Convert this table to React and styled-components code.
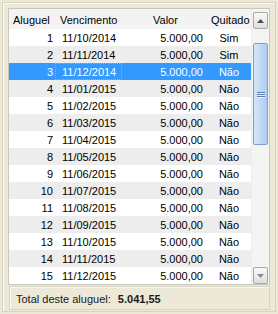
import styled, { createGlobalStyle } from 'styled-components';

const GlobalStyle = createGlobalStyle`
  html, body {
    margin: 0;
    padding: 0;
    background: #ece9d8;
  }
  body {
    font-family: "Liberation Sans", Arial, sans-serif;
    font-size: 11px;
    color: #000;
  }
`;

const parcelas = [
  { n: 1, venc: '11/10/2014', valor: '5.000,00', quitado: 'Sim' },
  { n: 2, venc: '11/11/2014', valor: '5.000,00', quitado: 'Sim' },
  { n: 3, venc: '11/12/2014', valor: '5.000,00', quitado: 'Não' },
  { n: 4, venc: '11/01/2015', valor: '5.000,00', quitado: 'Não' },
  { n: 5, venc: '11/02/2015', valor: '5.000,00', quitado: 'Não' },
  { n: 6, venc: '11/03/2015', valor: '5.000,00', quitado: 'Não' },
  { n: 7, venc: '11/04/2015', valor: '5.000,00', quitado: 'Não' },
  { n: 8, venc: '11/05/2015', valor: '5.000,00', quitado: 'Não' },
  { n: 9, venc: '11/06/2015', valor: '5.000,00', quitado: 'Não' },
  { n: 10, venc: '11/07/2015', valor: '5.000,00', quitado: 'Não' },
  { n: 11, venc: '11/08/2015', valor: '5.000,00', quitado: 'Não' },
  { n: 12, venc: '11/09/2015', valor: '5.000,00', quitado: 'Não' },
  { n: 13, venc: '11/10/2015', valor: '5.000,00', quitado: 'Não' },
  { n: 14, venc: '11/11/2015', valor: '5.000,00', quitado: 'Não' },
  { n: 15, venc: '11/12/2015', valor: '5.000,00', quitado: 'Não' },
];

const SELECTED = 3;

function App() {
  return (
    <>
      <GlobalStyle />
      <Frame>
        <Grid>
          <Table>
            <HeaderRow>
              <HeadCell>Aluguel</HeadCell>
              <HeadCell>Vencimento</HeadCell>
              <HeadCell>Valor</HeadCell>
              <HeadCell>Quitado</HeadCell>
            </HeaderRow>
            {parcelas.map((p, i) => {
              const selected = p.n === SELECTED;
              return (
                <Row key={p.n} $odd={i % 2 === 1} $selected={selected}>
                  <NumCell>{p.n}</NumCell>
                  <DateCell>
                    <Focus $active={selected}>{p.venc}</Focus>
                  </DateCell>
                  <ValueCell>{p.valor}</ValueCell>
                  <PaidCell>{p.quitado}</PaidCell>
                </Row>
              );
            })}
          </Table>
          <ScrollBar>
            <ArrowButton>
              <svg width="7" height="4" viewBox="0 0 7 4">
                <path d="M0 4 L3.5 0 L7 4 Z" fill="#4d4d4d" />
              </svg>
            </ArrowButton>
            <Track>
              <Thumb>
                <Grip>
                  <span />
                  <span />
                  <span />
                </Grip>
              </Thumb>
            </Track>
            <ArrowButton>
              <svg width="7" height="4" viewBox="0 0 7 4">
                <path d="M0 0 L7 0 L3.5 4 Z" fill="#8a8a8a" />
              </svg>
            </ArrowButton>
          </ScrollBar>
        </Grid>
        <Footer>
          Total deste aluguel: <strong>5.041,55</strong>
        </Footer>
      </Frame>
    </>
  );
}

export default App;

const Frame = styled.div`
  margin: 2px;
  width: 274px;
  height: 310px;
  border: 1px solid #d6d3c6;
  box-shadow: inset 1px 1px 0 #fbfaf6;
  padding: 5px 5px 1px 5px;
  box-sizing: border-box;
  display: flex;
  flex-direction: column;
  gap: 1px;
`;

const Grid = styled.div`
  display: flex;
  height: 277px;
  border: 1px solid #c9c7ba;
  background: #fff;
  box-sizing: border-box;
`;

const Table = styled.div`
  width: 242px;
  display: flex;
  flex-direction: column;
`;

const columns = '47px 93px 58px 44px';

const HeaderRow = styled.div`
  display: grid;
  grid-template-columns: ${columns};
  height: 20px;
  background: #f3f3f3;
`;

const HeadCell = styled.div`
  display: flex;
  align-items: center;
  padding-left: 4px;
  padding-top: 1px;
  white-space: nowrap;
`;

const Row = styled.div`
  display: grid;
  grid-template-columns: ${columns};
  height: 17px;
  align-items: center;
  background: ${(p) => (p.$selected ? '#3399ff' : p.$odd ? '#ededed' : '#fff')};
  color: ${(p) => (p.$selected ? '#fff' : '#000')};
`;

const NumCell = styled.div`
  text-align: right;
  padding-right: 3px;
`;

const DateCell = styled.div`
  height: 17px;
  display: flex;
  align-items: stretch;
`;

/* dotted focus rectangle around the current cell */
const Focus = styled.span`
  display: flex;
  align-items: center;
  box-sizing: border-box;
  padding: 0 5px 0 6px;
  margin-left: -1px;
  border: 1px dotted ${(p) => (p.$active ? '#3a2a10' : 'transparent')};
  outline: ${(p) => (p.$active ? '1px dotted #f0a030' : 'none')};
  outline-offset: -1px;
`;

const ValueCell = styled.div`
  text-align: right;
  padding-right: 4px;
`;

const PaidCell = styled.div`
  text-align: center;
`;

const ScrollBar = styled.div`
  width: 18px;
  display: flex;
  flex-direction: column;
  padding: 3px 1px 0 1px;
  box-sizing: border-box;
  background: #f4f4f0;
  border-left: 1px solid #ededea;
`;

const ArrowButton = styled.div`
  height: 17px;
  flex: none;
  display: flex;
  align-items: center;
  justify-content: center;
  box-sizing: border-box;
  border: 1px solid #a7a7a7;
  border-radius: 2px;
  background: linear-gradient(#fafafa, #dedede);
`;

const Track = styled.div`
  flex: 1;
  padding-top: 14px;
  padding-bottom: 122px;
  display: flex;
`;

const Thumb = styled.div`
  flex: 1;
  box-sizing: border-box;
  border: 1px solid #7c9dcb;
  border-radius: 2px;
  background: linear-gradient(90deg, #d6e6f8, #bed6f4 60%, #afcbf0);
  display: flex;
  align-items: center;
  justify-content: center;
`;

const Grip = styled.div`
  display: flex;
  flex-direction: column;
  gap: 1px;

  span {
    display: block;
    width: 8px;
    height: 1px;
    background: #5a7eb8;
    box-shadow: 0 1px 0 #e8f0fb;
  }
`;

const Footer = styled.div`
  height: 24px;
  box-sizing: border-box;
  border: 1px solid #d6d3c6;
  box-shadow: inset 1px 1px 0 #fbfaf6;
  display: flex;
  align-items: center;
  gap: 4px;
  padding-left: 6px;
  padding-top: 1px;
  margin-left: 1px;
  white-space: pre;
  color: #1a1a1a;

  strong {
    font-weight: bold;
  }
`;
